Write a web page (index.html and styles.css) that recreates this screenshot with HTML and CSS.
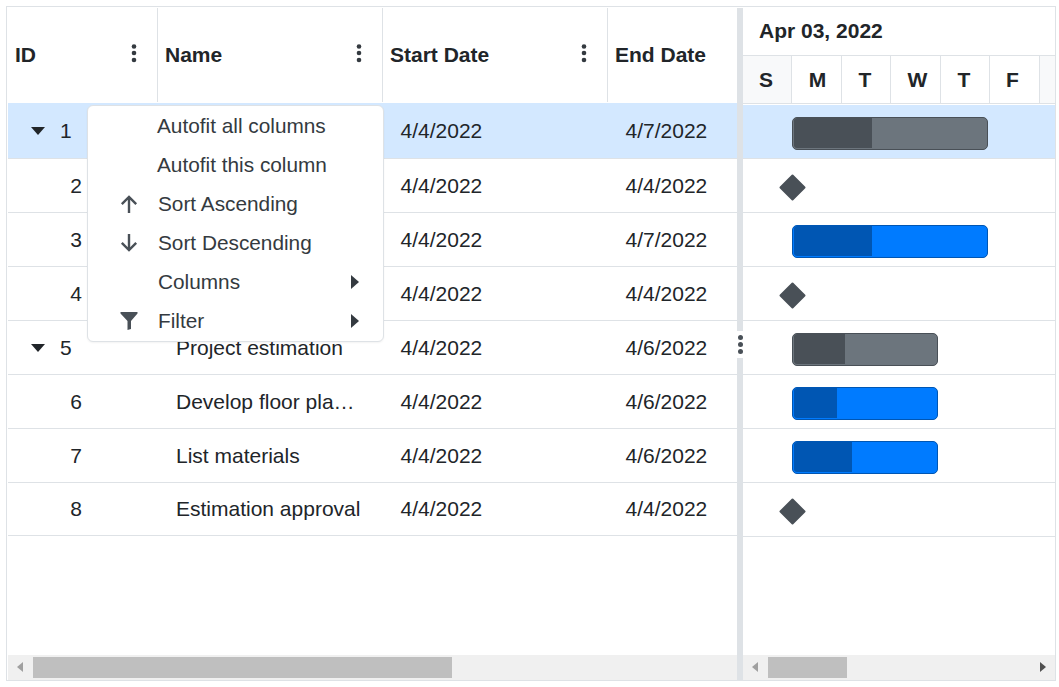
FILE: index.html
```html
<!DOCTYPE html>
<html lang="en">
<head>
<meta charset="utf-8">
<title>Gantt chart</title>
<link rel="stylesheet" href="styles.css">
</head>
<body>
<div class="gantt">
  <section class="pane grid-pane">
    <div class="pane-body">
      <div class="grid-header">
        <div class="hcell hcell-id"><span>ID</span><svg class="kebab" viewBox="0 0 6 20"><circle cx="3" cy="3.5" r="2.3"/><circle cx="3" cy="10" r="2.3"/><circle cx="3" cy="17" r="2.3"/></svg></div>
        <div class="hcell hcell-mid"><span>Name</span><svg class="kebab" viewBox="0 0 6 20"><circle cx="3" cy="3.5" r="2.3"/><circle cx="3" cy="10" r="2.3"/><circle cx="3" cy="17" r="2.3"/></svg></div>
        <div class="hcell hcell-mid"><span>Start Date</span><svg class="kebab" viewBox="0 0 6 20"><circle cx="3" cy="3.5" r="2.3"/><circle cx="3" cy="10" r="2.3"/><circle cx="3" cy="17" r="2.3"/></svg></div>
        <div class="hcell hcell-end"><span>End Date</span></div>
      </div>
      <div class="row row-first selected"><div class="cell-id parent"><i class="caret"></i><span>1</span></div><div class="cell-name"></div><div class="cell-date">4/4/2022</div><div class="cell-date">4/7/2022</div></div>
      <div class="row"><div class="cell-id">2</div><div class="cell-name"></div><div class="cell-date">4/4/2022</div><div class="cell-date">4/4/2022</div></div>
      <div class="row"><div class="cell-id">3</div><div class="cell-name"></div><div class="cell-date">4/4/2022</div><div class="cell-date">4/7/2022</div></div>
      <div class="row"><div class="cell-id">4</div><div class="cell-name"></div><div class="cell-date">4/4/2022</div><div class="cell-date">4/4/2022</div></div>
      <div class="row"><div class="cell-id parent"><i class="caret"></i><span>5</span></div><div class="cell-name">Project estimation</div><div class="cell-date">4/4/2022</div><div class="cell-date">4/6/2022</div></div>
      <div class="row"><div class="cell-id">6</div><div class="cell-name">Develop floor pla…</div><div class="cell-date">4/4/2022</div><div class="cell-date">4/6/2022</div></div>
      <div class="row"><div class="cell-id">7</div><div class="cell-name">List materials</div><div class="cell-date">4/4/2022</div><div class="cell-date">4/6/2022</div></div>
      <div class="row row-last"><div class="cell-id">8</div><div class="cell-name">Estimation approval</div><div class="cell-date">4/4/2022</div><div class="cell-date">4/4/2022</div></div>
    </div>
    <div class="scrollbar">
      <div class="sb-btn"><i class="tri-left"></i></div>
      <div class="thumb thumb-grid"></div>
    </div>
  </section>

  <div class="splitter"><div class="resizer"><b></b><b></b><b></b></div></div>

  <section class="pane chart-pane">
    <div class="pane-body">
      <div class="timeline">
        <div class="tl-top">Apr 03, 2022</div>
        <div class="tl-days">
          <div class="day weekend nudge-l">S</div>
          <div class="day nudge-r">M</div>
          <div class="day nudge-l">T</div>
          <div class="day nudge-r2">W</div>
          <div class="day nudge-l">T</div>
          <div class="day nudge-l2">F</div>
          <div class="day weekend day-rest"></div>
        </div>
      </div>
      <div class="crow selected"><div class="bar gray long"><div class="progress p-40"></div></div></div>
      <div class="crow"><div class="milestone"></div></div>
      <div class="crow"><div class="bar blue long"><div class="progress p-40"></div></div></div>
      <div class="crow"><div class="milestone"></div></div>
      <div class="crow"><div class="bar gray short"><div class="progress p-36"></div></div></div>
      <div class="crow"><div class="bar blue short"><div class="progress p-30"></div></div></div>
      <div class="crow"><div class="bar blue short"><div class="progress p-40b"></div></div></div>
      <div class="crow"><div class="milestone"></div></div>
    </div>
    <div class="scrollbar">
      <div class="sb-btn"><i class="tri-left"></i></div>
      <div class="thumb thumb-chart"></div>
      <div class="sb-btn sb-end"><i class="tri-right"></i></div>
    </div>
  </section>

  <div class="menu">
    <div class="mi"><span class="mi-icon"></span><span class="mi-text mi-text-a">Autofit all columns</span></div>
    <div class="mi"><span class="mi-icon"></span><span class="mi-text mi-text-a">Autofit this column</span></div>
    <div class="mi"><span class="mi-icon"><svg viewBox="0 0 18 18" class="ico"><path d="M9 18V2M1.800 9.200 9 2l7.200 7.200"/></svg></span><span class="mi-text">Sort Ascending</span></div>
    <div class="mi"><span class="mi-icon"><svg viewBox="0 0 18 18" class="ico"><path d="M9 0v16M1.800 8.800 9 16l7.200-7.200"/></svg></span><span class="mi-text">Sort Descending</span></div>
    <div class="mi"><span class="mi-icon"></span><span class="mi-text">Columns</span><i class="mi-arrow"></i></div>
    <div class="mi"><span class="mi-icon"><svg viewBox="0 0 18 18" class="ico-fill"><path d="M.5 0h17v1.500L11 9v8l-3.500 1V9L.5 1.500z"/></svg></span><span class="mi-text">Filter</span><i class="mi-arrow"></i></div>
  </div>
</div>
</body>
</html>
```

FILE: styles.css
```css
* { box-sizing: border-box; }
html, body { margin: 0; height: 100%; background: #fff; }
body {
  padding: 6px 0 0 6px;
  font-family: "Liberation Sans", Arial, sans-serif;
  font-size: 21px;
  color: #212529;
  overflow: hidden;
}
.gantt {
  position: relative;
  display: flex;
  width: 1050px;
  height: 675px;
  padding: 1px 0 0 1px;
  border: 1px solid #dee2e6;
  background: #fff;
}
.pane { display: flex; flex-direction: column; min-width: 0; }
.grid-pane { width: 729px; flex: none; }
.chart-pane { flex: 1; }
.pane-body { flex: 1; min-height: 0; overflow: hidden; }

/* grid */
.grid-header {
  display: grid;
  grid-template-columns: 150px 225px 225px 129px;
  height: 95px;
}
.hcell {
  display: flex;
  align-items: center;
  justify-content: space-between;
  height: 94px;
  padding: 0 20px 0 7px;
  font-weight: 700;
  border-right: 1px solid #dee2e6;
}
.hcell-end { border-right: 0; padding-right: 0; }
.kebab { width: 6px; height: 20px; fill: #343a40; margin-top: -5px; }
.row {
  display: grid;
  grid-template-columns: 150px 225px 225px 129px;
  align-items: center;
  height: 54px;
  border-bottom: 1px solid #dee2e6;
}
.row-first { height: 56px; }
.row-last { height: 53px; }
.selected { background: #d3e8ff; }
.cell-id { text-align: right; padding-right: 76px; }
.parent {
  display: flex;
  align-items: center;
  gap: 15px;
  padding: 0 0 0 23px;
  text-align: left;
}
.caret {
  width: 0;
  height: 0;
  border-left: 7.500px solid transparent;
  border-right: 7.500px solid transparent;
  border-top: 8px solid #212529;
}
.cell-name {
  padding: 0 0 0 18px;
  white-space: nowrap;
}
.cell-date { padding-left: 17.500px; white-space: nowrap; }

/* splitter */
.splitter {
  position: relative;
  flex: none;
  width: 6px;
  background: #dee2e6;
}
.resizer {
  position: absolute;
  left: 0;
  top: 323px;
  width: 6px;
  height: 27px;
  padding-top: 4px;
  background: #fff;
  display: flex;
  flex-direction: column;
  align-items: center;
  gap: 2px;
}
.resizer b {
  width: 5px;
  height: 5px;
  border-radius: 50%;
  background: #495057;
}

/* timeline */
.timeline { height: 97px; }
.tl-top {
  display: flex;
  align-items: center;
  height: 48px;
  padding: 0 0 2px 16px;
  font-weight: 700;
  border-bottom: 1px solid #dee2e6;
}
.tl-days {
  display: grid;
  grid-template-columns: 49px 50px 49px 50px 49px 50px 1fr;
  height: 48px;
  border-bottom: 1px solid #dee2e6;
}
.day {
  display: flex;
  align-items: center;
  justify-content: center;
  font-weight: 700;
  border-right: 1px solid #dee2e6;
}
.nudge-l { padding-right: 2px; }
.nudge-l2 { padding-right: 4px; }
.nudge-r { padding-left: 2px; }
.nudge-r2 { padding-left: 4px; }
.weekend { background: #f8f9fa; }
.day-rest { border-right: 0; }
.crow {
  height: 54px;
  padding: 12px 0 0 49px;
  border-bottom: 1px solid #dee2e6;
}
.bar {
  height: 33px;
  border: 1px solid;
  border-radius: 5px;
  overflow: hidden;
  padding-left: 1px;
}
.long { width: 196px; }
.short { width: 146px; }
.gray { background: #6c757d; border-color: #495057; }
.blue { background: #007bff; border-color: #0056b3; }
.progress { height: 30px; border-radius: 3px 0 0 3px; }
.gray .progress { background: #495057; }
.blue .progress { background: #0056b3; }
.p-40 { width: 78px; }
.p-36 { width: 51px; }
.p-30 { width: 43px; }
.p-40b { width: 58px; }
.milestone {
  width: 19px;
  height: 19px;
  margin: 6.500px 0 0 -9px;
  border-radius: 1px;
  background: #495057;
  transform: rotate(45deg);
}

/* scrollbars */
.scrollbar {
  display: flex;
  flex: none;
  height: 25px;
  padding-bottom: 1px;
  background: #f0f0f0;
  align-items: center;
}
.sb-btn {
  display: flex;
  align-items: center;
  justify-content: center;
  flex: none;
  width: 25px;
  height: 21px;
}
.sb-end { margin-left: auto; width: 28px; padding-right: 9px; justify-content: flex-end; }
.tri-left, .tri-right {
  width: 0;
  height: 0;
  border-top: 5.500px solid transparent;
  border-bottom: 5.500px solid transparent;
}
.tri-left { border-right: 6px solid #a0a0a0; margin-right: 2px; }
.tri-right { border-left: 6px solid #505050; }
.thumb { flex: none; height: 21px; background: #bfbfbf; }
.thumb-grid { width: 419px; }
.thumb-chart { width: 79px; }

/* context menu */
.menu {
  position: absolute;
  left: 80px;
  top: 98px;
  width: 297px;
  height: 237px;
  font-size: 20.800px;
  background: #fff;
  border: 1px solid #dee2e6;
  border-radius: 6px;
  box-shadow: 0 1px 2px rgba(0, 0, 0, 0.05);
  color: #343a40;
}
.mi {
  display: flex;
  align-items: center;
  height: 39px;
  padding-right: 24px;
  white-space: nowrap;
}
.mi-icon {
  display: flex;
  align-items: center;
  flex: none;
  width: 70px;
  padding-left: 32px;
}
.mi-text { flex: 1; }
.mi-text-a { margin-left: -1px; }
.ico { width: 18px; height: 18px; fill: none; stroke: #495057; stroke-width: 2.400; }
.ico-fill { width: 18px; height: 18px; fill: #495057; }
.mi-arrow {
  width: 0;
  height: 0;
  border-top: 7px solid transparent;
  border-bottom: 7px solid transparent;
  border-left: 8px solid #343a40;
}
```
